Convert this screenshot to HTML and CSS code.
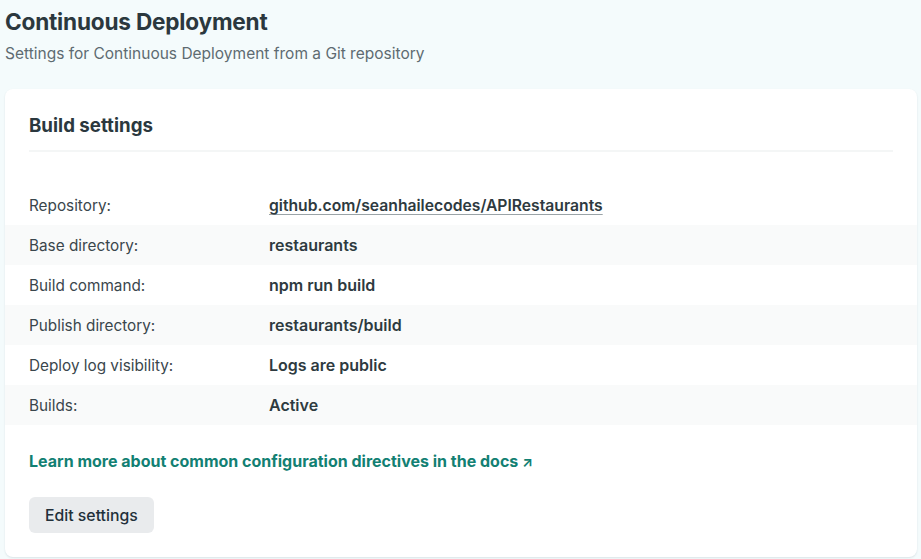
FILE: index.html
```html
<!DOCTYPE html>
<html lang="en">
<head>
<meta charset="utf-8">
<link rel="stylesheet" href="styles.css">
</head>
<body>
<div class="page">
  <header class="page-head">
    <h1 class="page-title">Continuous Deployment</h1>
    <p class="page-sub">Settings for Continuous Deployment from a Git repository</p>
  </header>
  <section class="card">
    <div class="card-head">
      <h2 class="card-title">Build settings</h2>
    </div>
    <dl class="rows">
      <div class="row"><dt>Repository:</dt><dd><a class="repo" href="#">github.com/seanhailecodes/APIRestaurants</a></dd></div>
      <div class="row"><dt>Base directory:</dt><dd>restaurants</dd></div>
      <div class="row"><dt>Build command:</dt><dd>npm run build</dd></div>
      <div class="row"><dt>Publish directory:</dt><dd>restaurants/build</dd></div>
      <div class="row"><dt>Deploy log visibility:</dt><dd>Logs are public</dd></div>
      <div class="row"><dt>Builds:</dt><dd>Active</dd></div>
    </dl>
    <p class="docs"><a href="#">Learn more about common configuration directives in the docs <span class="arrow">↗</span></a></p>
    <div class="actions"><button class="btn">Edit settings</button></div>
  </section>
</div>
</body>
</html>
```
FILE: styles.css
```css
* { box-sizing: border-box; }
html, body { margin: 0; padding: 0; }
body {
  background: #f4fbfc;
  font-family: Inter, "Noto Sans", "Liberation Sans", sans-serif;
  color: #2e3a40;
  width: 921px;
  height: 559px;
  overflow: hidden;
}
.page { padding: 0 4px 0 5px; }
.page-head { padding-top: 8px; }
.page-title {
  margin: 0;
  font-size: 22.6px;
  line-height: 28px;
  font-weight: 700;
  color: #2b383e;
  letter-spacing: -0.2px;
}
.page-sub {
  margin: 8px 0 0;
  font-size: 15.5px;
  line-height: 20px;
  color: #5e6b71;
}
.card {
  margin-top: 25px;
  background: #fff;
  border-radius: 8px;
  box-shadow: 0 1px 2px rgba(30, 60, 70, 0.12);
  padding: 24px 0 24px;
}
.card-head {
  margin: 0 24px;
  padding-bottom: 11px;
  border-bottom: 2px solid #f4f6f6;
}
.card-title {
  margin: 0;
  font-size: 18.7px;
  line-height: 26px;
  font-weight: 700;
  color: #2b383e;
}
.rows { margin: 33px 0 0; }
.row {
  display: flex;
  align-items: center;
  height: 40px;
  padding: 0 24px;
  font-size: 15.3px;
}
.row:nth-child(even) { background: #f9fafa; }
.row dt { width: 240px; color: #3a464c; }
.row dd { margin: 0; font-size: 16px; font-weight: 600; color: #2e3a40; }
.repo {
  font-size: 15.7px;
  color: #2e3a40;
  text-decoration: underline;
  text-decoration-color: #9aa3a7;
  text-underline-offset: 3px;
}
.docs {
  margin: 26px 24px 0;
  font-size: 16px;
  line-height: 20px;
  font-weight: 700;
}
.docs a { color: #128073; text-decoration: none; }
.arrow { font-size: 14px; }
.actions { margin: 25px 24px 0; }
.btn {
  font-family: inherit;
  font-size: 15.8px;
  font-weight: 500;
  color: #22303a;
  background: #e9ebed;
  border: 0;
  border-radius: 6px;
  height: 36px;
  padding: 0 16px;
}
```
